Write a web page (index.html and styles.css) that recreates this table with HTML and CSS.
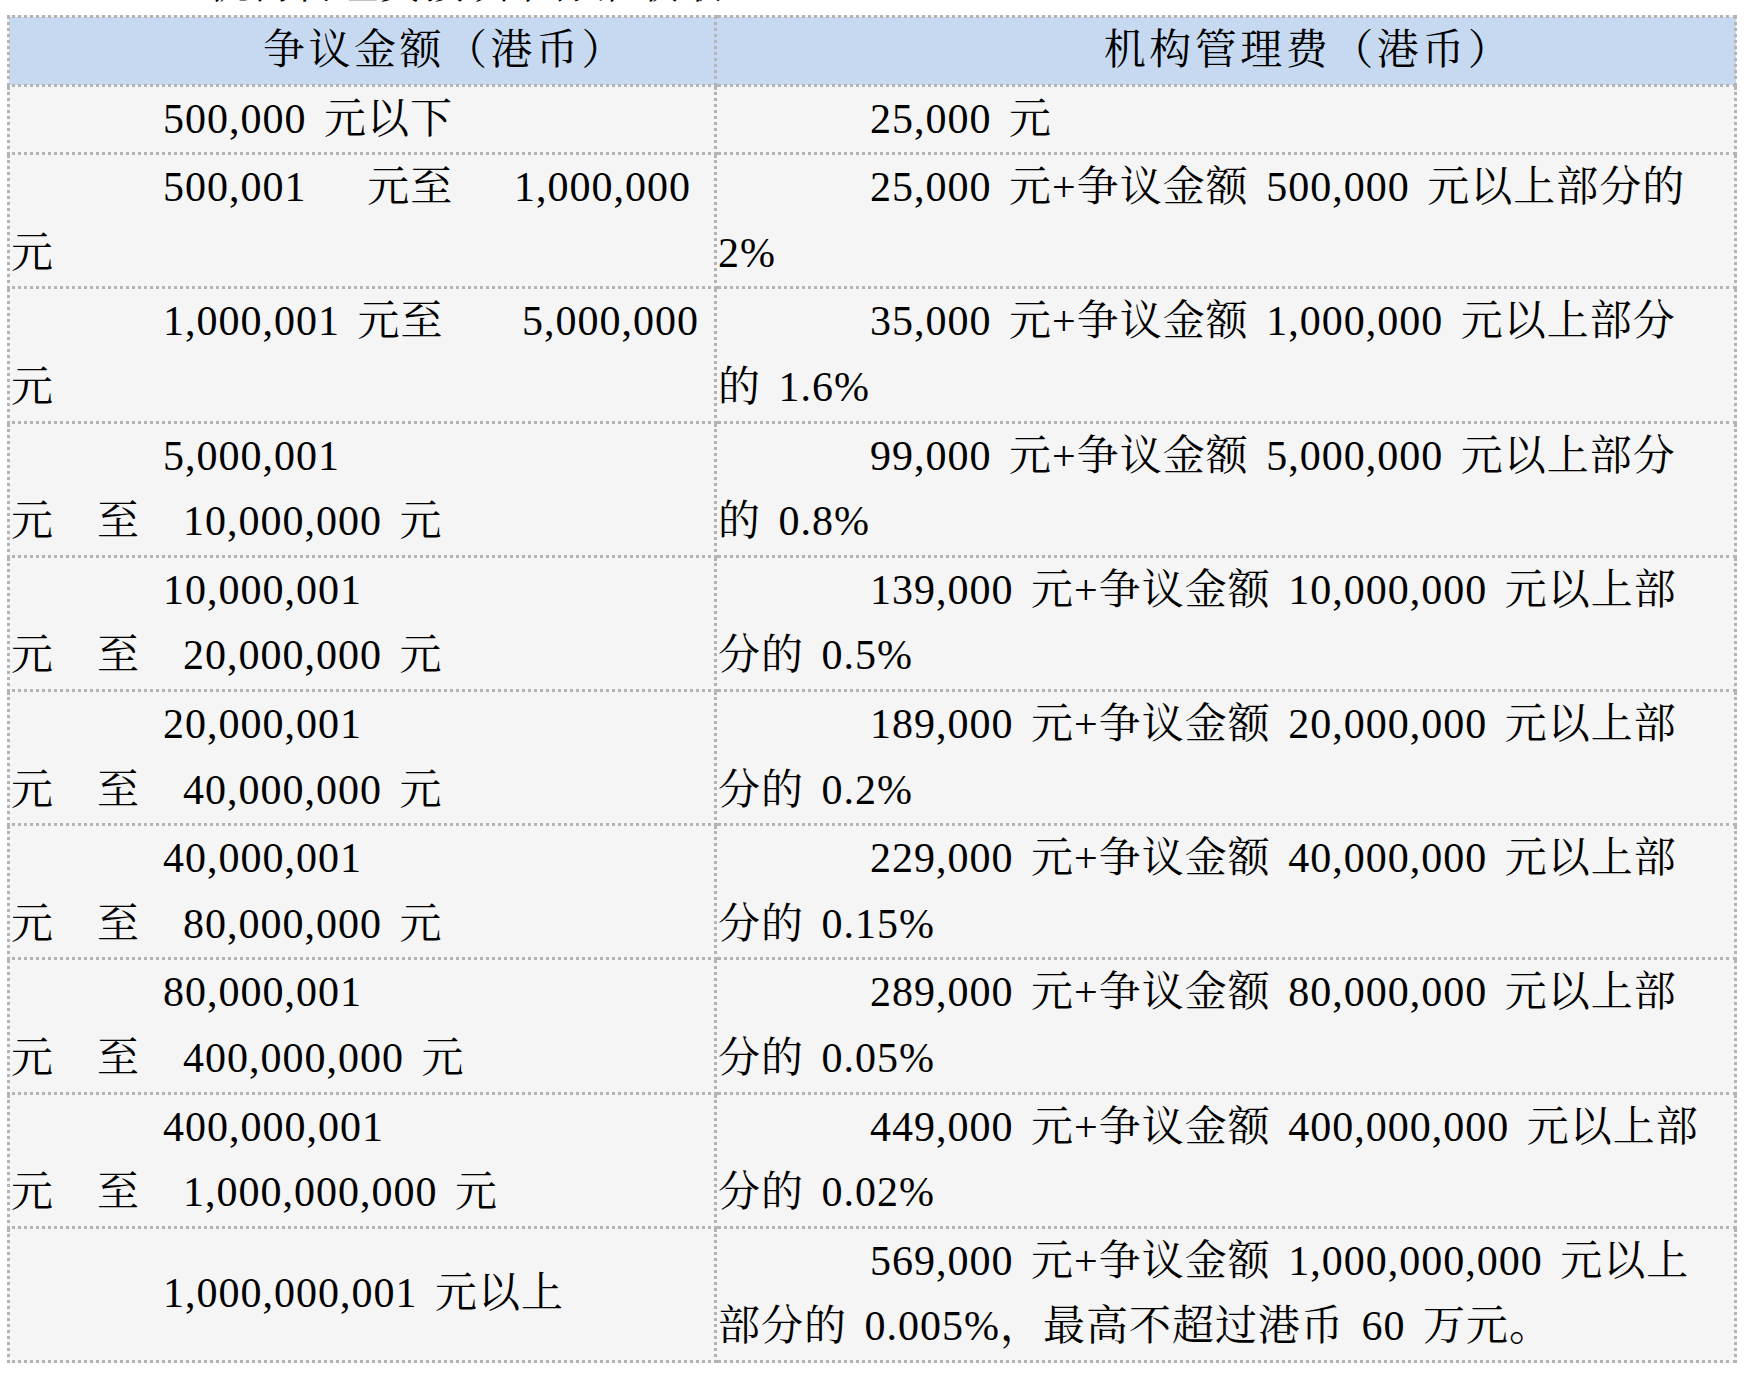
FILE: index.html
```html
<!DOCTYPE html>
<html lang="zh-CN">
<head>
<meta charset="utf-8">
<title>机构管理费</title>
<link rel="stylesheet" href="styles.css">
</head>
<body>
<p class="intro">机构管理费按以下标准收取</p>
<table class="fees">
  <colgroup><col class="c1"><col class="c2"></colgroup>
  <thead>
    <tr><th>争议金额（港币）</th><th>机构管理费（港币）</th></tr>
  </thead>
  <tbody>
    <tr>
      <td><div class="ind">500,000 元以下</div></td>
      <td><div class="ind">25,000 元</div></td>
    </tr>
    <tr>
      <td><div class="spread"><span>500,001</span><span>元至</span><span>1,000,000</span></div><div>元</div></td>
      <td><div class="ind">25,000 元+争议金额 500,000 元以上部分的</div><div>2%</div></td>
    </tr>
    <tr>
      <td><div class="spread wide"><span>1,000,001 元至</span><span>5,000,000</span></div><div>元</div></td>
      <td><div class="ind">35,000 元+争议金额 1,000,000 元以上部分</div><div>的 1.6%</div></td>
    </tr>
    <tr>
      <td><div class="ind">5,000,001</div><div>元　至　10,000,000 元</div></td>
      <td><div class="ind">99,000 元+争议金额 5,000,000 元以上部分</div><div>的 0.8%</div></td>
    </tr>
    <tr>
      <td><div class="ind">10,000,001</div><div>元　至　20,000,000 元</div></td>
      <td><div class="ind">139,000 元+争议金额 10,000,000 元以上部</div><div>分的 0.5%</div></td>
    </tr>
    <tr>
      <td><div class="ind">20,000,001</div><div>元　至　40,000,000 元</div></td>
      <td><div class="ind">189,000 元+争议金额 20,000,000 元以上部</div><div>分的 0.2%</div></td>
    </tr>
    <tr>
      <td><div class="ind">40,000,001</div><div>元　至　80,000,000 元</div></td>
      <td><div class="ind">229,000 元+争议金额 40,000,000 元以上部</div><div>分的 0.15%</div></td>
    </tr>
    <tr>
      <td><div class="ind">80,000,001</div><div>元　至　400,000,000 元</div></td>
      <td><div class="ind">289,000 元+争议金额 80,000,000 元以上部</div><div>分的 0.05%</div></td>
    </tr>
    <tr>
      <td><div class="ind">400,000,001</div><div>元　至　1,000,000,000 元</div></td>
      <td><div class="ind">449,000 元+争议金额 400,000,000 元以上部</div><div>分的 0.02%</div></td>
    </tr>
    <tr>
      <td><div class="ind">1,000,000,001 元以上</div></td>
      <td><div class="ind">569,000 元+争议金额 1,000,000,000 元以上</div><div>部分的 0.005%，最高不超过港币 60 万元。</div></td>
    </tr>
  </tbody>
</table>
</body>
</html>
```
FILE: styles.css
```css
html, body {
  background: #ffffff;
}
body {
  margin: 0 7px;
  font-family: "Liberation Serif", "Noto Serif CJK SC", "Noto Sans CJK SC", serif;
  font-size: 42px;
  color: #000000;
  letter-spacing: 1px;
  word-spacing: 6px;
}
.intro {
  margin: -41px 0 0 0;
  line-height: 50px;
  text-indent: 200px;
  white-space: nowrap;
}
.fees {
  margin-top: 6px;
  width: 1730px;
  border-collapse: collapse;
  table-layout: fixed;
  background: #f5f5f5;
}
.c1 { width: 707px; }
.fees th,
.fees td {
  border: 3px dotted #b4b4b4;
  padding: 0 1px;
  line-height: 65.6px;
  vertical-align: middle;
  white-space: nowrap;
  text-align: left;
  font-weight: normal;
}
.fees th {
  background: #c6d9f1;
  text-align: center;
  text-indent: 166px;
  letter-spacing: 3.5px;
}
.ind {
  text-indent: 152px;
}
.spread {
  display: flex;
  justify-content: space-between;
  padding-left: 152px;
  padding-right: 22px;
}
.spread.wide {
  padding-right: 14px;
}
```
